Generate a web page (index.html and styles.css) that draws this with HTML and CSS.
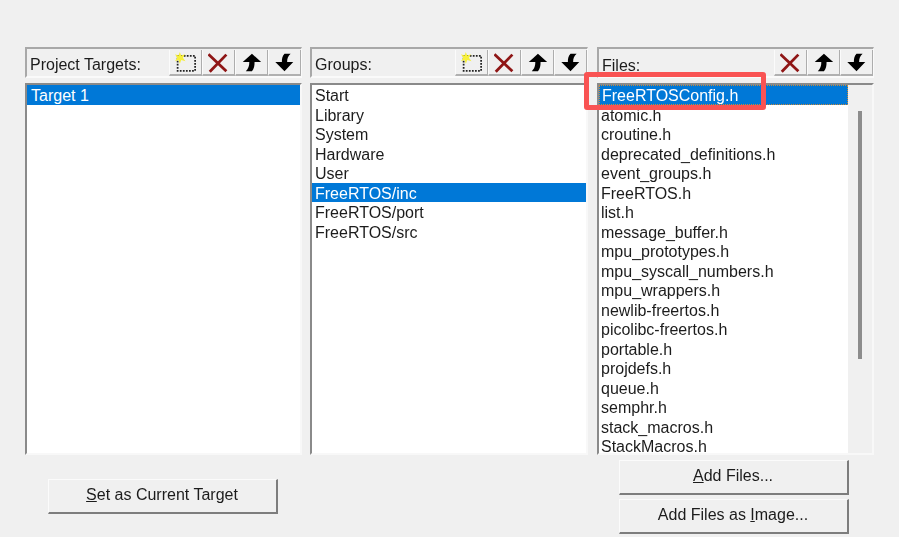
FILE: index.html
```html
<!DOCTYPE html>
<html lang="en">
<head>
<meta charset="utf-8">
<title>Manage Project Items</title>
<link rel="stylesheet" href="styles.css">
</head>
<body>
<svg class="defs" width="0" height="0" aria-hidden="true">
  <symbol id="i-new" viewBox="0 0 24 24">
    <rect x="3" y="4.500" width="20" height="17" fill="none" stroke="#222" stroke-width="2" stroke-dasharray="2 1.500"/>
    <path d="M5.500 0l1.500 4 4.500-1.500L9 6.500l3 4-4.800-1.300L5.500 13.500 4 9.200 0 10.500l2.500-4L0 2.500 4 4z" fill="#f7f03c"/>
  </symbol>
  <symbol id="i-del" viewBox="0 0 24 24">
    <path d="M.5 2.500L21 22M21 3 2 22.500" fill="none" stroke="#8f1616" stroke-width="3.200"/>
  </symbol>
  <symbol id="i-up" viewBox="0 0 24 24">
    <path d="M12.500 2L23 11.500H15.500C15.500 16 15 19 12.500 22H5.500C8.500 19 9.500 16 9.500 11.500H2z" fill="#000"/>
  </symbol>
  <symbol id="i-down" viewBox="0 0 24 24">
    <path d="M12 22L1.500 11.500H9C9 7 9.500 5 12 2H19C16 5 15 7 15 11.500H22z" fill="#000"/>
  </symbol>
</svg>
<main class="dialog">
  <section class="col col-targets">
    <header class="head">
      <span class="title">Project Targets:</span>
      <div class="tools">
        <button class="tool"><svg class="ic"><use href="#i-new"/></svg></button>
        <button class="tool"><svg class="ic"><use href="#i-del"/></svg></button>
        <button class="tool"><svg class="ic"><use href="#i-up"/></svg></button>
        <button class="tool"><svg class="ic"><use href="#i-down"/></svg></button>
      </div>
    </header>
    <ul class="list">
      <li class="sel">Target 1</li>
    </ul>
    <div class="foot foot-left">
      <button class="btn"><u>S</u>et as Current Target</button>
    </div>
  </section>
  <section class="col col-groups">
    <header class="head">
      <span class="title">Groups:</span>
      <div class="tools">
        <button class="tool"><svg class="ic"><use href="#i-new"/></svg></button>
        <button class="tool"><svg class="ic"><use href="#i-del"/></svg></button>
        <button class="tool"><svg class="ic"><use href="#i-up"/></svg></button>
        <button class="tool"><svg class="ic"><use href="#i-down"/></svg></button>
      </div>
    </header>
    <ul class="list">
      <li>Start</li>
      <li>Library</li>
      <li>System</li>
      <li>Hardware</li>
      <li>User</li>
      <li class="sel">FreeRTOS/inc</li>
      <li>FreeRTOS/port</li>
      <li>FreeRTOS/src</li>
    </ul>
  </section>
  <section class="col col-files">
    <header class="head head-files">
      <span class="title">Files:</span>
      <div class="tools">
        <button class="tool"><svg class="ic"><use href="#i-del"/></svg></button>
        <button class="tool"><svg class="ic"><use href="#i-up"/></svg></button>
        <button class="tool"><svg class="ic"><use href="#i-down"/></svg></button>
      </div>
    </header>
    <div class="list list-files">
      <ul class="rows">
        <li class="sel focus">FreeRTOSConfig.h</li>
        <li>atomic.h</li>
        <li>croutine.h</li>
        <li>deprecated_definitions.h</li>
        <li>event_groups.h</li>
        <li>FreeRTOS.h</li>
        <li>list.h</li>
        <li>message_buffer.h</li>
        <li>mpu_prototypes.h</li>
        <li>mpu_syscall_numbers.h</li>
        <li>mpu_wrappers.h</li>
        <li>newlib-freertos.h</li>
        <li>picolibc-freertos.h</li>
        <li>portable.h</li>
        <li>projdefs.h</li>
        <li>queue.h</li>
        <li>semphr.h</li>
        <li>stack_macros.h</li>
        <li>StackMacros.h</li>
      </ul>
      <div class="scroll"><div class="thumb"></div></div>
    </div>
    <div class="foot foot-files">
      <button class="btn"><u>A</u>dd Files...</button>
      <button class="btn">Add Files as <u>I</u>mage...</button>
    </div>
  </section>
  <div class="callout"></div>
</main>
</body>
</html>
```
FILE: styles.css
```css
* { box-sizing: border-box; }
html, body { margin: 0; height: 100%; }
body {
  background: #f0f0f0;
  font-family: "Liberation Sans", Arial, sans-serif;
  font-size: 16px;
  color: #1c1c1c;
  overflow: hidden;
}
.defs { position: absolute; }
.dialog {
  position: relative;
  display: grid;
  grid-template-columns: 277px 278px 278px;
  column-gap: 8px;
  padding: 47px 0 0 25px;
  height: 537px;
  filter: blur(.5px);
}
.col { display: flex; flex-direction: column; min-width: 0; }
.col-files { margin-left: 1px; }
.head {
  display: flex;
  align-items: center;
  justify-content: space-between;
  height: 31px;
  padding-left: 3px;
  border-top: 2px solid #a8a8a8;
  border-left: 2px solid #a8a8a8;
  border-right: 1px solid #fafafa;
  border-bottom: 2px solid #fafafa;
}
.title { line-height: 1; padding-top: 5px; }
.head-files .title { padding-top: 6px; }
.tools { display: flex; align-self: stretch; margin-top: 1px; }
.tool {
  width: 33px;
  padding: 1px 0 0;
  display: flex;
  align-items: center;
  justify-content: center;
  background: #f0f0f0;
  border: 0;
  border-left: 1px solid #fbfbfb;
  border-right: 1px solid #adadad;
  border-bottom: 2px solid #b0b0b0;
}
.ic { width: 21px; height: 21px; }
.list {
  height: 372px;
  margin: 5px 0 0;
  padding: 0;
  list-style: none;
  background: #fff;
  border-top: 2px solid #8a8a8a;
  border-left: 2px solid #8a8a8a;
  border-right: 2px solid #f8f8f8;
  border-bottom: 2px solid #f8f8f8;
  overflow: hidden;
}
.list li {
  height: 19.500px;
  line-height: 21px;
  padding-left: 4px;
  white-space: nowrap;
}
.col-groups .list li { padding-left: 3px; }
.list li.sel { background: #0078d7; color: #fff; }
.list li.sel.focus { outline: 1px dotted #c98a3a; outline-offset: -1px; }
.list-files { display: flex; }
.rows { flex: 1; margin: 0; padding: 0; list-style: none; min-width: 0; }
.col-files .rows li { padding-left: 2px; }
.col-files .rows li.sel { padding-left: 3px; }
.scroll {
  flex: none;
  width: 24px;
  background: #f0f0f0;
  padding: 26px 0 0 10px;
}
.thumb { width: 4px; height: 248px; background: #8c8c8c; }
.foot { display: flex; flex-direction: column; align-items: center; }
.foot-left { margin-top: 24px; padding-right: 2px; }
.foot-files { margin-top: 5px; row-gap: 4px; padding-right: 4px; }
.btn {
  width: 230px;
  height: 35px;
  padding: 0 0 2px;
  font: inherit;
  color: inherit;
  background: #f0f0f0;
  border-top: 1px solid #fbfbfb;
  border-left: 1px solid #fbfbfb;
  border-right: 2px solid #7d7d7d;
  border-bottom: 2px solid #7d7d7d;
}
.callout {
  position: absolute;
  left: 584px;
  top: 72px;
  width: 182px;
  height: 38px;
  border: 5px solid #f95353;
  border-radius: 3px;
}
```
